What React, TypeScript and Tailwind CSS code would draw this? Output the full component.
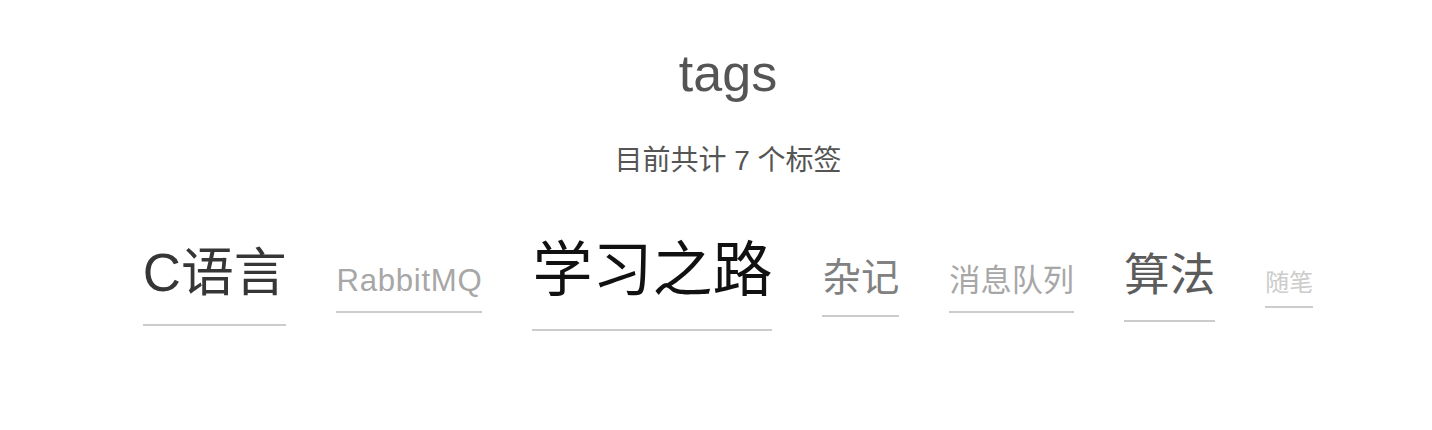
import React from "react";

const tags = [
  { name: "C语言", size: "text-[52.8px]", color: "text-[#363636]", extra: "" },
  { name: "RabbitMQ", size: "text-[31.2px]", color: "text-[#a7a7a7]", extra: "tracking-[0.7px]" },
  { name: "学习之路", size: "text-[60px]", color: "text-[#111111]", extra: "" },
  { name: "杂记", size: "text-[38.4px]", color: "text-[#818181]", extra: "" },
  { name: "消息队列", size: "text-[31.2px]", color: "text-[#a7a7a7]", extra: "" },
  { name: "算法", size: "text-[45.6px]", color: "text-[#5c5c5c]", extra: "" },
  { name: "随笔", size: "text-[24px]", color: "text-[#cccccc]", extra: "" },
];

export default function App() {
  return (
    <div
      className="w-[1432px] h-[430px] bg-white pl-[24px]"
      style={{ fontFamily: '"Liberation Sans", "Noto Sans CJK SC", sans-serif' }}
    >
      <div className="flex flex-col items-center pt-[47px]">
        <h1 className="text-[52px] leading-none text-[#555555] font-normal">tags</h1>
        <div className="mt-[48px] text-[28px] leading-none text-[#555555]">目前共计 7 个标签</div>
        <div className="mt-[38px] flex items-baseline justify-center gap-[50px]">
          {tags.map((t) => (
            <a
              key={t.name}
              href="#"
              className={`block leading-[1.93] border-b-2 border-[#cccccc] whitespace-nowrap ${t.size} ${t.color} ${t.extra}`}
            >
              {t.name}
            </a>
          ))}
        </div>
      </div>
    </div>
  );
}
